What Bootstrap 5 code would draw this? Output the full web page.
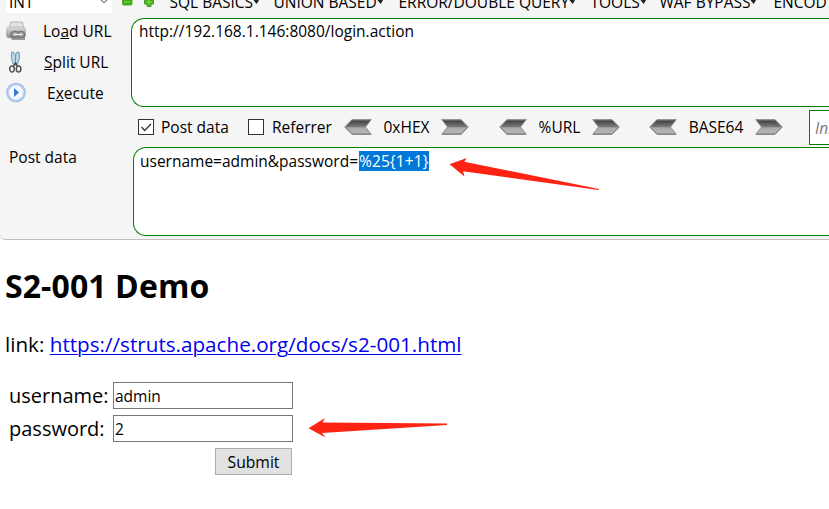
<!DOCTYPE html>
<html lang="en">
<head>
<meta charset="utf-8">
<title>S2-001 Demo</title>
<link href="https://cdn.jsdelivr.net/npm/bootstrap@5.3.0/dist/css/bootstrap.min.css" rel="stylesheet">
<style>
body{font-family:"Open Sans","Noto Sans",sans-serif;font-size:15.5px;line-height:20px;color:#000;background:#fff;overflow:hidden;height:509px}
.hackbar{height:240px;background:#f5f5f5;border-bottom:1px solid #c0c0c0;border-bottom-left-radius:5px;overflow:hidden}
.menu{height:18px}
.menu-label{height:20px;margin-top:-8px}
.db{width:106px;height:13px;padding-left:3px;background:#fff;margin-left:6px}
.slot{flex:none;white-space:nowrap}
.drop{width:7px;height:5px}
.m1{width:104px}.m2{width:125px}.m3{width:192px}.m4{width:69px}.m5{width:114px}
.side{width:131px}
.side-post{width:133px;padding-left:9px}
.actions{margin:-3px 0 -1px}
.action{height:31px}
.ico{width:20px;height:22px;margin-left:6px}
.t1{padding-left:17px}.t2{padding-left:18px}.t3{padding-left:21px}
.box{border:1px solid #008000;border-right:0;background:#fff;height:89px;border-radius:13px 0 0 13px;padding:2px 0 0 7px}
.box-post{padding:3px 0 0 6px}
.options{height:40px;padding-left:138px}
.check{width:16px;height:16px;border:1px solid #333;background:#fff}
.o1{width:94px;padding-left:7px}.o2{width:80px;padding-left:8px}
.hex{width:69px}.url{width:65px}.b64{width:78px}
.arr{width:28px;height:16px}
.gap-code{margin-left:30px}
.gap-last{margin-left:29px}
.init{width:40px;height:35px;border:1px solid #008000;background:#fff;color:#777;padding:7px 0 0 5px;margin-left:26px}
.sel{background:#0078d7;color:#fff;width:70px;margin-left:1px;letter-spacing:.1px}
.demo{padding:26px 0 0 5px}
.demo-title{font-size:32px;line-height:40px;font-weight:700;margin:0 0 24px;letter-spacing:.1px}
.demo-link{font-size:20.65px;line-height:28px;margin-bottom:24px}
.demo-link a{color:#00e;text-decoration:underline;text-decoration-thickness:1px;text-underline-offset:2px}
.line{height:27px;margin-bottom:6px;padding-left:4px}
.line label{width:104px;font-size:20px;line-height:27px}
.field{width:180px;height:27px;border:1px solid #767676;border-radius:0;font-size:15.5px;line-height:25px;padding:0 1px;background:#fff;color:#000}
.send{width:77px;height:27px;background:#e1e1e1;border:1px solid #adadad;border-radius:0;font-size:15.7px;line-height:26px;padding:0;color:#000;margin-left:210px}
.marks{pointer-events:none}
</style>
</head>
<body class="position-relative">
<svg width="0" height="0" class="position-absolute">
<defs>
<linearGradient id="g" x1="0" y1="0" x2="0" y2="1"><stop offset="0" stop-color="#777"/><stop offset=".12" stop-color="#484848"/><stop offset=".5" stop-color="#7c7c7c"/><stop offset=".55" stop-color="#aaa"/><stop offset="1" stop-color="#b8b8b8"/></linearGradient>
<linearGradient id="pr" x1="0" y1="0" x2="0" y2="1"><stop offset="0" stop-color="#ddd"/><stop offset="1" stop-color="#8b8b8b"/></linearGradient>
<radialGradient id="pl"><stop offset="0" stop-color="#fff"/><stop offset=".6" stop-color="#eef4ff"/><stop offset=".8" stop-color="#b5cdf2"/><stop offset="1" stop-color="#9dbbe6"/></radialGradient>
<symbol id="la" viewBox="0 0 28 16"><path d="M.7 8 8 .6H27.3L21.5 8 27.3 15.4H8Z" fill="url(#g)" stroke="#8c8c8c" stroke-width=".9"/><path d="M1.500 8.500 8 15H26.500" fill="none" stroke="#777"/></symbol>
<symbol id="ra" viewBox="0 0 28 16"><path d="M27.3 8 20 .6H.7L6.500 8 .7 15.4H20Z" fill="url(#g)" stroke="#8c8c8c" stroke-width=".9"/><path d="M26.500 8.500 20 15H1.500" fill="none" stroke="#777"/></symbol>
<symbol id="dr" viewBox="0 0 7 5"><path d="M.5 0H6L5 2 3.500 4 2 2Z" fill="#222"/></symbol>
</defs>
</svg>

<!-- Toolbar -->
<div class="hackbar">
  <div class="menu d-flex align-items-start">
    <div class="db d-flex slot"><span class="menu-label">INT</span><svg class="ms-auto me-1" width="8" height="5" viewBox="0 0 8 5"><path d="M.5-.5 4 2.700 7.500-.5" fill="none" stroke="#444"/></svg></div>
    <svg class="slot" width="57.500" height="9" viewBox="0 0 57.500 9"><rect x="10.500" y="-2" width="9.500" height="7" rx="1" fill="#3aac12" stroke="#58a93c"/><path d="M12 2H18.500" stroke="#8fe04c"/><path d="M34.500-3H39V.5H41.500V4H39V6.500H35V4H32.500V.5H34.500Z" fill="#43b818" stroke="#459a26"/><path d="M37 0V5M34 2H40" stroke="#87dc46"/></svg>
    <div class="menu-label slot m1 d-flex"><span>SQL BASICS</span><svg class="drop mt-2"><use href="#dr"/></svg></div>
    <div class="menu-label slot m2 d-flex"><span>UNION BASED</span><svg class="drop mt-2"><use href="#dr"/></svg></div>
    <div class="menu-label slot m3 d-flex"><span>ERROR/DOUBLE QUERY</span><svg class="drop mt-2"><use href="#dr"/></svg></div>
    <div class="menu-label slot m4 d-flex"><span>TOOLS</span><svg class="drop mt-2"><use href="#dr"/></svg></div>
    <div class="menu-label slot m5 d-flex"><span>WAF BYPASS</span><svg class="drop mt-2"><use href="#dr"/></svg></div>
    <div class="menu-label slot">ENCOD</div>
  </div>

  <div class="d-flex">
    <div class="side slot">
      <div class="actions">
      <div class="action d-flex align-items-center">
        <svg class="ico slot" viewBox="0 0 20 22"><path d="M4.500 2H16.500L18 9H3Z" fill="#e2e2e2" stroke="#aaa" stroke-width=".8"/><rect x=".5" y="7" width="19" height="11" rx="2.500" fill="url(#pr)" stroke="#aaa" stroke-width=".6"/><path d="M4 16H19V20H6Z" fill="#999"/><ellipse cx="9" cy="14.500" rx="4" ry="3" fill="none" stroke="#707070" stroke-width="1.600"/><ellipse cx="15" cy="14.500" rx="3.700" ry="3" fill="none" stroke="#777" stroke-width="1.600"/><path d="M8 14.500H16" stroke="#eee" stroke-width="1.500"/></svg>
        <span class="slot t1">Lo<u>a</u>d URL</span>
      </div>
      <div class="action d-flex align-items-center">
        <svg class="ico slot" viewBox="0 0 20 22"><path d="M5.500 1Q4.500 7 7 13L9.500 14V4Q8 0 5.500 1ZM13 1Q15 7 11.500 13L9.500 14V4Q10.500 0 13 1Z" fill="#b5d5e5" stroke="#7396a8" stroke-width=".9"/><path d="M7.500 15 9.500 12 11.500 15" fill="none" stroke="#444" stroke-width="1.500"/><ellipse cx="6" cy="18" rx="2.300" ry="3" fill="none" stroke="#555" stroke-width="1.500"/><ellipse cx="12.600" cy="18" rx="2.300" ry="3" fill="none" stroke="#555" stroke-width="1.500"/></svg>
        <span class="slot t2"><u>S</u>plit URL</span>
      </div>
      <div class="action d-flex align-items-center">
        <svg class="ico slot" viewBox="0 0 20 22"><circle cx="10" cy="10.500" r="9.800" fill="url(#pl)"/><circle cx="10" cy="10.500" r="7" fill="#f6f9ff" stroke="#dbe7fb"/><path d="M8 6 13 10.500 8 15Z" fill="#3c78c3"/></svg>
        <span class="slot t3">E<u>x</u>ecute</span>
      </div>
      </div>
    </div>
    <div class="box flex-fill">http://192.168.1.146:8080/login.action</div>
  </div>

  <div class="options d-flex align-items-center">
    <span class="check slot d-flex"><svg width="14" height="14" viewBox="0 0 14 14"><path d="M2.500 7 5.700 10.500 12 4" fill="none" stroke="#333" stroke-width="1.300"/></svg></span>
    <span class="slot o1">Post data</span>
    <span class="check slot"></span>
    <span class="slot o2">Referrer</span>
    <svg class="arr slot"><use href="#la"/></svg><span class="slot hex text-center">0xHEX</span><svg class="arr slot"><use href="#ra"/></svg>
    <svg class="arr slot gap-code"><use href="#la"/></svg><span class="slot url text-center">%URL</span><svg class="arr slot"><use href="#ra"/></svg>
    <svg class="arr slot gap-last"><use href="#la"/></svg><span class="slot b64 text-center">BASE64</span><svg class="arr slot"><use href="#ra"/></svg>
    <div class="init slot fst-italic">Ini</div>
  </div>

  <div class="d-flex">
    <div class="side-post slot">Post data</div>
    <div class="box box-post flex-fill d-flex align-items-start"><span>username=admin&amp;password=</span><span class="sel slot">%25{1+1}</span></div>
  </div>
</div>

<!-- Page under test -->
<div class="demo">
  <h1 class="demo-title">S2-001 Demo</h1>
  <div class="demo-link">link: <a href="#">https://struts.apache.org/docs/s2-001.html</a></div>
  <form>
    <div class="line d-flex"><label for="u">username:</label><input id="u" class="field" type="text" value="admin"></div>
    <div class="line d-flex"><label for="p">password:</label><input id="p" class="field" type="text" value="2"></div>
    <button type="button" class="send d-block">Submit</button>
  </form>
</div>

<!-- Arrows pointing at the payload and its result -->
<svg class="marks position-absolute top-0 start-0" width="829" height="509" viewBox="0 0 829 509" fill="#ff2314">
  <path d="M449.500 164.300 466.700 158 464.300 161.700 599 189 598.500 190 463 171.200 464.500 176.500Z"/>
  <path d="M308.500 428.300 325 418 322.500 422.500 447 423.500V425L322 433 325.500 437.500Z"/>
</svg>
<script src="https://cdn.jsdelivr.net/npm/bootstrap@5.3.0/dist/js/bootstrap.bundle.min.js"></script>
</body>
</html>
